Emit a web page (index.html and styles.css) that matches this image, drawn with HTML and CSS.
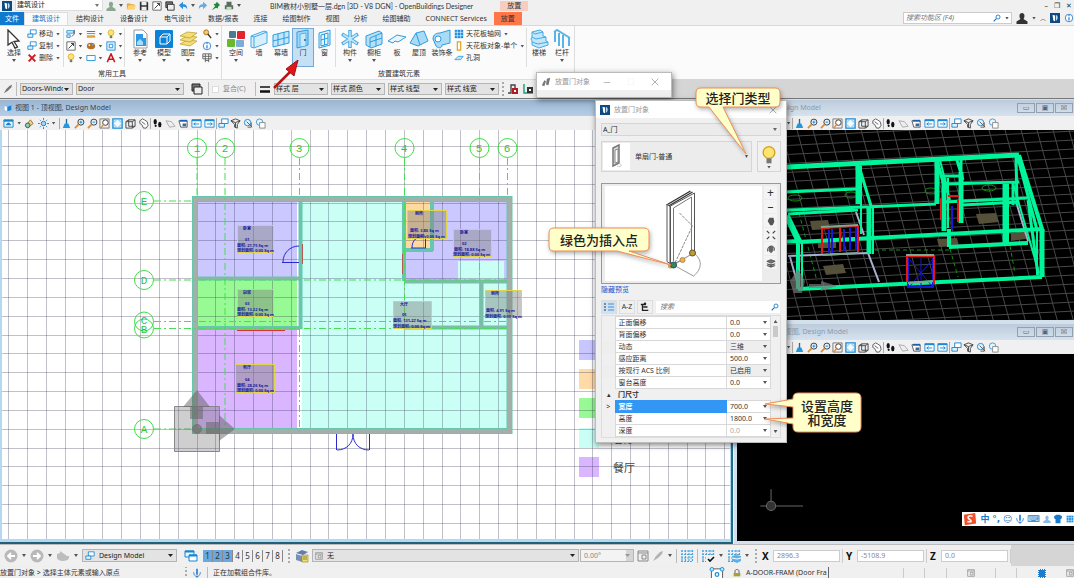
FILE: index.html
```
<!DOCTYPE html>
<html lang="zh-CN">
<head>
<meta charset="utf-8">
<title>OpenBuildings Designer</title>
<link rel="stylesheet" href="styles.css">
</head>
<body>
<svg class="defs" aria-hidden="true">
  <symbol id="brand" viewBox="0 0 12 12"><rect width="12" height="12" fill="#0b4a82"/><path d="M3 2l3 1v7L4 9z" fill="#fff"/><path d="M7 2.500c3 0 3 6 0 7z" fill="#b9dcf5"/></symbol>
  <symbol id="viewcube" viewBox="0 0 12 12"><path d="M1 3l4 1v7L1 9z" fill="#fff"/><path d="M5 4l6-2v7l-6 2z" fill="#1283d8"/><path d="M1 3l5-2 5 1-6 2z" fill="#7ec1f0"/></symbol>
  <symbol id="user" viewBox="0 0 12 12"><path d="M6 1c3 0 3 4 1.500 6l4 2.500V12H.5V9.500l4-2.500C3 5 3 1 6 1z" fill="currentColor"/></symbol>
  <symbol id="folder" viewBox="0 0 12 12"><path d="M1 3h4l1 1h4v6H1z" fill="#e0aa3c"/><path d="M3 5h9l-2 5H1z" fill="#ffd26b"/></symbol>
  <symbol id="save" viewBox="0 0 12 12"><path d="M1 1h9l1 1v9H1z" fill="#333"/><path d="M3 1h6v4H3zM3 7h6v4H3z" fill="#eee"/></symbol>
  <symbol id="undo" viewBox="0 0 12 12"><path d="M1 5l5-4v3c4 0 5 2 5 6-1-2-2-3-5-3v3z" fill="#2e8fdc"/></symbol>
  <symbol id="pin" viewBox="0 0 12 12"><path d="M7 1l4 4-2 1-1 3-2-1-5 3 4-5-2-2 3-1z" fill="#1d8a3a"/></symbol>
  <symbol id="print" viewBox="0 0 12 12"><path d="M3 1h6v4H3zM1 5h10v5H1z" fill="#5b6b60"/><path d="M3 7h6v4H3z" fill="#bfe3b2"/></symbol>
  <symbol id="arrow" viewBox="0 0 18 20"><path d="M3 1l11 11-5 .5 3.500 5.500-2.500 1.200-3-6L3 16z" fill="#fff" stroke="#333" stroke-width="1.300"/></symbol>
  <symbol id="copy" viewBox="0 0 12 12"><path d="M4 1h7v5H4z" fill="#fff" stroke="#1787d4"/><path d="M1 6h6v4H1z" fill="#e5f3fc" stroke="#1787d4"/></symbol>
  <symbol id="del" viewBox="0 0 12 12"><path d="M2 2l8 8M10 2l-8 8" stroke="#d3191f" stroke-width="2.400"/></symbol>
  <symbol id="cross" viewBox="0 0 12 12"><path d="M1 1l10 10M11 1L1 11" stroke="#888"/></symbol>
  <symbol id="panel" viewBox="0 0 12 12"><path d="M1 2h8v3H1zM1 7h4v3H1z" fill="#dff1fc" stroke="#1b8bd6"/><path d="M10 1v5L7 9" stroke="#444" fill="none"/></symbol>
  <symbol id="lines" viewBox="0 0 12 12"><path d="M1 3h10" stroke="#555"/><path d="M1 5.500h10" stroke="#1b8bd6"/><path d="M1 9h10" stroke="#e2a33c" stroke-width="3"/></symbol>
  <symbol id="bulb" viewBox="0 0 12 12"><circle cx="6" cy="4.500" r="3.500" fill="#ffe46e" stroke="#d0a024" stroke-width=".8"/><path d="M4.500 8h3v3h-3z" fill="#777"/></symbol>
  <symbol id="measure" viewBox="0 0 12 12"><path d="M1 1h10v10H1z" fill="#fff" stroke="#555"/><path d="M3 9l6-6M6 3h3v3" fill="none" stroke="#222"/></symbol>
  <symbol id="palette" viewBox="0 0 12 12"><ellipse cx="6" cy="6" rx="5" ry="4" fill="#b5712a"/><circle cx="4" cy="5" r="1" fill="#ffd"/><circle cx="8" cy="4.500" r="1" fill="#6bf"/></symbol>
  <symbol id="frame" viewBox="0 0 12 12"><path d="M1 1h10v10H1z" fill="#d9effc" stroke="#1b8bd6"/><path d="M4 4h4v4H4z" fill="#fff" stroke="#1b8bd6"/></symbol>
  <symbol id="rect" viewBox="0 0 12 12"><path d="M1 3h10v6H1z" fill="#fff" stroke="#1b8bd6"/></symbol>
  <symbol id="glyph-a" viewBox="0 0 12 12"><path d="M1.500 11L6 1l4.500 10M3.500 7.500h5" fill="none" stroke="#c8171e" stroke-width="1.800"/></symbol>
  <symbol id="ref" viewBox="0 0 20 20"><path d="M4 1h9l4 4v14H4z" fill="#fff" stroke="#999"/><path d="M6 5h7v4h3v8H6z" fill="#2b9ae6"/><path d="M7 13l3-3 3 3v3H7z" fill="#a8dbff"/></symbol>
  <symbol id="model" viewBox="0 0 20 20"><rect x="1" y="1" width="18" height="18" rx="1" fill="#0a82d8"/><path d="M6 8h7v7H6zM6 8l3-3h7l-3 3M16 5v7l-3 3" fill="none" stroke="#fff"/></symbol>
  <symbol id="layers" viewBox="0 0 20 20"><g fill="#f1dd79" stroke="#b99a24" stroke-width=".7"><path d="M2 15l7-4 10 1-7 5z"/><path d="M2 11l7-4 10 1-7 5z"/><path d="M2 7l7-4 10 1-7 5z"/></g></symbol>
  <symbol id="find" viewBox="0 0 12 12"><circle cx="5" cy="4" r="3" fill="#f3c76a" stroke="#a86c12"/><path d="M7 6l4 5" stroke="#333" stroke-width="1.600"/></symbol>
  <symbol id="info" viewBox="0 0 12 12"><circle cx="6" cy="6" r="4.500" fill="#fff" stroke="#2577d1"/><path d="M6 2.500v1.500M6 5v4" stroke="#2577d1" stroke-width="1.400"/></symbol>
  <symbol id="table" viewBox="0 0 12 12"><path d="M1 1h10v6H1zM1 4h10M4 1v10M8 1v10M4 9h4" fill="none" stroke="#555"/></symbol>
  <symbol id="space" viewBox="0 0 20 20"><rect x="3" y="2" width="7" height="7" rx="1" fill="#4a7c8f"/><rect x="11" y="2" width="8" height="8" rx="1" fill="#e0252c"/><rect x="1" y="10" width="8" height="8" rx="1" fill="#69b82f"/><rect x="10" y="11" width="8" height="7" rx="1" fill="#7aaed8"/></symbol>
  <symbol id="wall" viewBox="0 0 20 20"><path d="M2 7l13-5 3 1v11L5 19l-3-1z" fill="#d7eefb" stroke="#46a9e4"/><path d="M5 8v11M5 8l13-5M2 7l3 1" fill="none" stroke="#46a9e4"/></symbol>
  <symbol id="curtain" viewBox="0 0 20 20"><path d="M2 6l16-4v12L2 18z" fill="#c2e6fa" stroke="#2d9de0"/><path d="M7 5v12M13 3v12M2 12l16-4" stroke="#2d9de0"/></symbol>
  <symbol id="door" viewBox="0 0 20 20"><path d="M4 3l11-2v15L4 19z" fill="#9fd6f7" stroke="#2d9de0"/><path d="M7 5l6-1v13l-6 1z" fill="#c8e9fb" stroke="#58b4e8"/><circle cx="12" cy="11" r="1" fill="#17689e"/></symbol>
  <symbol id="window" viewBox="0 0 20 20"><path d="M4 4l11-3v15L4 19z" fill="#e4f4fd" stroke="#2d9de0"/><path d="M6 6l7-2v11l-7 2zM9.500 5v11M6 11l7-2" fill="none" stroke="#2d9de0"/></symbol>
  <symbol id="part" viewBox="0 0 20 20"><g fill="none" stroke="#46a9e4" stroke-width="3.500"><path d="M10 1v18M2 5l16 10M18 5L2 15"/></g><g fill="none" stroke="#c5e8fa" stroke-width="1.500"><path d="M10 2v16M3 5.500l14 9M17 5.500L3 14.500"/></g></symbol>
  <symbol id="cabinet" viewBox="0 0 20 20"><path d="M2 7l13-5 3 2v11L7 19l-5-3z" fill="#b7e0f7" stroke="#2d9de0"/><path d="M6 9v9M6 9l12-5M12 7v10M6 13l12-4" fill="none" stroke="#2d9de0"/></symbol>
  <symbol id="slab" viewBox="0 0 20 20"><path d="M1 12l9-6 9 2-8 5-3-1-2 2z" fill="#e8f6fe" stroke="#2d9de0"/></symbol>
  <symbol id="roof" viewBox="0 0 20 20"><path d="M1 14L7 4l8-2 4 10-10 5z" fill="#a9daf6" stroke="#2d9de0"/><path d="M7 4l4 12" stroke="#2d9de0"/></symbol>
  <symbol id="trim" viewBox="0 0 20 20"><path d="M1 10c0-5 4-6 7-6l10-3v13l-8 2c0 3-3 4-6 1z" fill="#a9daf6" stroke="#2d9de0"/><circle cx="6" cy="10" r="3" fill="#fff" stroke="#2d9de0"/></symbol>
  <symbol id="ceil" viewBox="0 0 12 12"><path d="M1 1h10v10H1z" fill="#198de0"/><path d="M1 4h10M1 8h10M4 1v10M8 1v10" stroke="#fff" stroke-width=".7"/></symbol>
  <symbol id="ceilone" viewBox="0 0 12 12"><path d="M4 1h4v10H4z" fill="#fff" stroke="#e0a518" stroke-width="1.400"/></symbol>
  <symbol id="hole" viewBox="0 0 12 12"><path d="M1 8l4-4h6L8 8z" fill="#bfe4fa" stroke="#2d9de0"/></symbol>
  <symbol id="stairs" viewBox="0 0 20 20"><path d="M3 3l8-2 3 2v4l3 1v4l2 1v3l-9 3-7-3v-4l-1-2 1-2z" fill="#c2e6fa" stroke="#46a9e4"/><path d="M3 3l3 2 8-2M3 8l4 2 10-2M3 13l6 2 10-2" fill="none" stroke="#46a9e4"/></symbol>
  <symbol id="rail" viewBox="0 0 20 20"><path d="M2 3l3-2 13 8M3 2v11M7 4v13M11 6v13M17 9v8" fill="none" stroke="#5bb4e8" stroke-width="2"/></symbol>
  <symbol id="lens" viewBox="0 0 12 12"><circle cx="7.500" cy="4.500" r="3" fill="none" stroke="#1677c9" stroke-width="1.300"/><path d="M5 7l-4 4" stroke="#1677c9" stroke-width="1.800"/></symbol>
  <symbol id="v-display" viewBox="0 0 12 12"><path d="M1 2h10v8H1z" fill="#e8f5fd" stroke="#1685cc"/><path d="M1 3h10" stroke="#1685cc" stroke-width="2"/><path d="M3 8c2-4 4-4 6 0z" fill="#1685cc"/></symbol>
  <symbol id="v-lamp" viewBox="0 0 12 12"><path d="M2 8l5-6 3 4-6 5z" fill="#f5cf6f" stroke="#8a7651"/><circle cx="4" cy="8" r="2.500" fill="#8fd0a4" stroke="#357"/></symbol>
  <symbol id="v-sun" viewBox="0 0 12 12"><circle cx="6" cy="6" r="2.500" fill="#9fd4f5" stroke="#1d7dc2"/><path d="M6 0v2M6 10v2M0 6h2M10 6h2M2 2l1 1M9 9l1 1M10 2L9 3M2 10l1-1" stroke="#1d7dc2"/></symbol>
  <symbol id="v-brush" viewBox="0 0 12 12"><path d="M6 1v6" stroke="#1b6ba8" stroke-width="1.500"/><path d="M4 6h4l2 5H2z" fill="#2497dd"/></symbol>
  <symbol id="v-zin" viewBox="0 0 12 12"><circle cx="7.500" cy="4.500" r="3.300" fill="#e4f4ff" stroke="#333"/><path d="M6 4.500h3M7.500 3v3" stroke="#1685cc"/><path d="M5 7l-4 4" stroke="#e88722" stroke-width="1.800"/></symbol>
  <symbol id="v-zout" viewBox="0 0 12 12"><circle cx="7.500" cy="4.500" r="3.300" fill="#e4f4ff" stroke="#333"/><path d="M6 4.500h3" stroke="#1685cc"/><path d="M5 7l-4 4" stroke="#e88722" stroke-width="1.800"/></symbol>
  <symbol id="v-zwin" viewBox="0 0 12 12"><path d="M1 1h10v10H1z" fill="none" stroke="#777"/><circle cx="7" cy="5" r="3" fill="#fff" stroke="#333"/><path d="M5 7l-3 4" stroke="#e88722" stroke-width="1.500"/></symbol>
  <symbol id="v-fit" viewBox="0 0 12 12"><path d="M1 1h10v10H1z" fill="#f3fbff" stroke="#1b8bd6" stroke-width="1.500"/><path d="M3 5V3h2M9 5V3H7M3 7v2h2M9 7v2H7" fill="none" stroke="#7fc2ec"/></symbol>
  <symbol id="v-cube" viewBox="0 0 12 12"><path d="M1 4l3-2h7v7l-3 2H1zM1 4h7v7M8 4l3-2M4 2v7h7" fill="none" stroke="#444"/></symbol>
  <symbol id="v-hand" viewBox="0 0 12 12"><path d="M2 3l3-2 2 1 3 2 1 4-2 3H6L4 7 2 6z" fill="#fff" stroke="#555"/><path d="M4 4l4 3" stroke="#555"/></symbol>
  <symbol id="v-walk" viewBox="0 0 12 12"><ellipse cx="3.500" cy="4" rx="1.800" ry="3" fill="#111"/><ellipse cx="8.500" cy="7" rx="1.800" ry="3" fill="#111"/><circle cx="4" cy="8.500" r="1.200" fill="#111"/></symbol>
  <symbol id="v-fly" viewBox="0 0 12 12"><path d="M1 3l6 1 4 5-6 1z" fill="#eee" stroke="#aaa"/></symbol>
  <symbol id="v-cam" viewBox="0 0 12 12"><path d="M1 3h9v7H3z" fill="#fff" stroke="#555"/><path d="M2 3h8" stroke="#1b62b6" stroke-width="2"/><path d="M5 6h4v3H5z" fill="#36699d"/></symbol>
  <symbol id="v-prev" viewBox="0 0 12 12"><path d="M1 2h10v8H1z" fill="#fff" stroke="#1b8bd6"/><path d="M1 2.500h10" stroke="#1b8bd6" stroke-width="2"/><path d="M3 6.500h6M5 5L3 6.500 5 8" fill="none" stroke="#1b8bd6"/></symbol>
  <symbol id="v-next" viewBox="0 0 12 12"><path d="M1 2h10v8H1z" fill="#fff" stroke="#1b8bd6"/><path d="M1 2.500h10" stroke="#1b8bd6" stroke-width="2"/><path d="M3 6.500h6M7 5l2 1.500L7 8" fill="none" stroke="#1b8bd6"/></symbol>
  <symbol id="v-clip" viewBox="0 0 12 12"><path d="M1 3l5-2 5 2-3 4v4l-3-1V7z" fill="#eee" stroke="#444"/><path d="M1 3l5 2 5-2M6 5v5" fill="none" stroke="#444"/></symbol>
  <symbol id="v-mask" viewBox="0 0 12 12"><circle cx="5" cy="5" r="3.500" fill="#dff2fd" stroke="#1b8bd6"/><path d="M4 4l6 6M9 5v5H5" fill="none" stroke="#555"/></symbol>
  <symbol id="v-over" viewBox="0 0 12 12"><circle cx="5" cy="4.500" r="3.500" fill="#e8f6fe" stroke="#3a9bd9"/><path d="M5 5h6v6H5z" fill="#fff" stroke="#888"/></symbol>
  <symbol id="pen" viewBox="0 0 12 12"><path d="M1 11l3-5 4-4 3-1-1 3-4 4z" fill="#777"/></symbol>
  <symbol id="stack" viewBox="0 0 12 12"><path d="M1 1h8v7H1z" fill="#777" stroke="#222"/><path d="M3 4h8v7H3z" fill="#eee" stroke="#222"/></symbol>
  <symbol id="weight" viewBox="0 0 12 12"><path d="M1 4h10" stroke="#111" stroke-width="1.500"/><path d="M1 8.500h10" stroke="#111" stroke-width="2.500"/></symbol>
  <symbol id="lockred" viewBox="0 0 12 12"><path d="M1 10h3V2h4v4" fill="none" stroke="#444" stroke-width="1.400"/><path d="M5 5h6v6H5z" fill="#b11b25"/><path d="M7 7h2v2H7z" fill="#fff"/></symbol>
  <symbol id="lockgreen" viewBox="0 0 12 12"><path d="M2 1v9h9" fill="none" stroke="#1b9a78" stroke-width="1.400"/><path d="M5 4h6v6H5z" fill="#333"/><path d="M7 6h2v2H7z" fill="#fff"/></symbol>
  <symbol id="clip" viewBox="0 0 12 12"><path d="M1 10l3-6 2 1-2 6zM6 9l1-7 4-1-2 9z" fill="#777"/></symbol>
  <symbol id="nav-back" viewBox="0 0 14 14"><circle cx="7" cy="7" r="6.500" fill="#b9b9b9"/><path d="M11 7H4M7 4L4 7l3 3" stroke="#fff" stroke-width="1.800" fill="none"/></symbol>
  <symbol id="nav-next" viewBox="0 0 14 14"><circle cx="7" cy="7" r="6.500" fill="#b9b9b9"/><path d="M3 7h7M7 4l3 3-3 3" stroke="#fff" stroke-width="1.800" fill="none"/></symbol>
  <symbol id="nav-disc" viewBox="0 0 14 14"><path d="M1 5l3-1V2l7 5h2v2c-1 4-11 4-12 0z" fill="#bdbdbd"/></symbol>
  <symbol id="views" viewBox="0 0 14 14"><path d="M1 2h9v6H1z" fill="#e8f5fd" stroke="#1787d4"/><path d="M1 2.500h9" stroke="#1787d4" stroke-width="2"/><path d="M5 6h8v6H5z" fill="#fff" stroke="#1787d4"/><path d="M5 6.500h8" stroke="#1787d4" stroke-width="2"/></symbol>
  <symbol id="dots" viewBox="0 0 14 14"><path d="M1 2h12M1 5.500h12M1 9h12M1 12.500h12M2 1v12M5.500 1v12M9 1v12M12.500 1v12" stroke="#4ba6df" stroke-width="1.200" stroke-dasharray="2 1" fill="none"/></symbol>
  <symbol id="dots-check" viewBox="0 0 14 14"><use href="#dots"/><path d="M5 6h9v8H5z" fill="#f0f0f0"/><path d="M7 10l2 2 4-4" fill="none" stroke="#111" stroke-width="1.600"/></symbol>
  <symbol id="dots-layer" viewBox="0 0 14 14"><use href="#dots"/><path d="M5 7l4-1 5 1v5l-4 2-5-2z" fill="#5fb0e4"/><path d="M5 9l5 1 4-1" stroke="#fff" fill="none"/></symbol>
  <symbol id="db" viewBox="0 0 14 14"><path d="M1 4l6-3 6 2-5 3z" fill="#5e7fb4"/><path d="M1 5v6l6 2V7z" fill="#7b8fb5"/><path d="M7 6h6v7H7z" fill="#f3df6c" stroke="#8e8130" stroke-width=".6"/><path d="M8 8h4M8 10h4" stroke="#8e8130"/></symbol>
  <symbol id="box" viewBox="0 0 12 12"><path d="M1 1h10v10H1zM1 3h10M5 5h4v4H5z" fill="none" stroke="currentColor"/></symbol>
  <symbol id="mic" viewBox="0 0 12 12"><path d="M5 1h2v7H5z" fill="#2577d1"/><path d="M2 5c0 7 8 7 8 0M6 9v3" stroke="#2577d1" fill="none"/></symbol>
  <symbol id="snap" viewBox="0 0 16 14"><path d="M2 2h12v12H2z" fill="#fff" stroke="#555"/><circle cx="2.500" cy="2.500" r="2" fill="#bde2fa" stroke="#168bd8"/><circle cx="13.500" cy="2.500" r="2" fill="#bde2fa" stroke="#168bd8"/><circle cx="8" cy="8" r="2" fill="#fff" stroke="#168bd8" stroke-width="1.300"/></symbol>
  <symbol id="lock" viewBox="0 0 12 12"><path d="M3 6V3c0-3 6-3 6 0v3" fill="none" stroke="#555" stroke-width="1.300"/><path d="M1 6h10v5H1z" fill="#a8a12a"/></symbol>
  <symbol id="list" viewBox="0 0 12 12"><path d="M1 3h2M1 6h2M1 9h2" stroke="#333"/><path d="M5 3h6M5 6h6M5 9h6" stroke="#4a8cc8"/></symbol>
  <symbol id="tree" viewBox="0 0 12 12"><path d="M1 3h6M3 3v7h7M4 6h5" stroke="#222" stroke-width="1.600" fill="none"/><circle cx="6" cy="2" r="1.500" fill="#222"/></symbol>
  <symbol id="p-hand" viewBox="0 0 12 12"><path d="M2 6l2-4h5l1 5-2 4H5z" fill="#555"/></symbol>
  <symbol id="p-fit" viewBox="0 0 12 12"><path d="M1 1l3 3M11 1L8 4M1 11l3-3M11 11L8 8" stroke="#444" stroke-width="1.500"/></symbol>
  <symbol id="p-rot" viewBox="0 0 12 12"><path d="M3 4l3-2 3 2v4l-3 3-3-3z" fill="#666"/><path d="M2 9C0 1 12 0 10 8" fill="none" stroke="#444"/></symbol>
  <symbol id="p-lay" viewBox="0 0 12 12"><path d="M1 4l5-2 5 2-5 2zM1 7l5 2 5-2M1 9l5 2 5-2" fill="#777" stroke="#444"/></symbol>
</svg>

<header class="titlebar">
  <svg class="i10"><use href="#brand"/></svg>
  <span class="combo title-combo"><select aria-label="工作流"><option>建筑设计</option></select></span>
  <div class="quick">
    <button aria-label="用户"><svg class="i10 sage"><use href="#user"/></svg></button><i class="caret"></i>
    <button aria-label="打开"><svg class="i10"><use href="#folder"/></svg></button>
    <button aria-label="保存"><svg class="i10"><use href="#save"/></svg></button>
    <button aria-label="保存设置"><svg class="i10"><use href="#measure"/></svg></button>
    <button aria-label="压缩"><svg class="i10"><use href="#stack"/></svg></button>
    <button aria-label="撤销"><svg class="i10"><use href="#undo"/></svg></button><i class="caret"></i>
    <button aria-label="重做"><svg class="i10 flip"><use href="#undo"/></svg></button>
    <button aria-label="固定"><svg class="i10"><use href="#pin"/></svg></button>
    <button aria-label="打印"><svg class="i10"><use href="#print"/></svg></button><i class="caret"></i>
  </div>
  <h1>BIM教材小别墅一层.dgn [3D - V8 DGN] - OpenBuildings Designer</h1>
  <span class="context">放置</span>
  <div class="winbtns"><button aria-label="最小化">–</button><button aria-label="还原">❐</button><button aria-label="关闭">✕</button></div>
</header>

<nav class="tabs">
  <button class="file">文件</button><button class="active">建筑设计</button><button>结构设计</button><button>设备设计</button><button>电气设计</button><button>数据/报表</button><button class="short">连接</button><button>绘图制作</button><button class="short">视图</button><button class="short">分析</button><button>绘图辅助</button><button class="short">CONNECT Services</button><button class="place">放置</button>
  <div class="tabs-right">
    <label class="search"><input type="text" placeholder="搜索功能区 (F4)" aria-label="搜索功能区"><svg class="i8"><use href="#lens"/></svg><i class="caret"></i></label>
    <svg class="i12"><use href="#user"/></svg><i class="caret"></i>
    <span class="chev">︿</span><svg class="i10"><use href="#brand"/></svg><svg class="i10"><use href="#info"/></svg>
  </div>
</nav>

<section class="ribbon">
  <div class="group g-common">
    <div class="tools">
      <button class="big w22"><svg><use href="#arrow"/></svg><span>选择</span><i class="caret"></i></button>
      <div class="stack edit">
        <button><svg class="i10"><use href="#copy"/></svg><span>移动</span><i class="caret"></i></button>
        <button><svg class="i10"><use href="#copy"/></svg><span>复制</span><i class="caret"></i></button>
        <button><svg class="i10"><use href="#del"/></svg><span>删除</span><i class="caret"></i></button>
      </div>
      <div class="nine">
        <button aria-label="属性"><svg class="i10"><use href="#panel"/></svg><i class="caret"></i></button>
        <button aria-label="线型"><svg class="i10"><use href="#lines"/></svg><i class="caret"></i></button>
        <button aria-label="照明"><svg class="i10"><use href="#bulb"/></svg><i class="caret"></i></button>
        <button aria-label="测量"><svg class="i10"><use href="#measure"/></svg><i class="caret"></i></button>
        <button aria-label="材质"><svg class="i10"><use href="#palette"/></svg><i class="caret"></i></button>
        <button aria-label="围栅"><svg class="i10"><use href="#frame"/></svg><i class="caret"></i></button>
        <button aria-label="显示"><svg class="i10"><use href="#bulb"/></svg><i class="caret"></i></button>
        <button aria-label="矩形"><svg class="i10"><use href="#rect"/></svg><i class="caret"></i></button>
        <button aria-label="文本"><svg class="i10"><use href="#glyph-a"/></svg><i class="caret"></i></button>
      </div>
      <button class="big w24"><svg><use href="#ref"/></svg><span>参考</span><i class="caret"></i></button>
      <button class="big w24"><svg><use href="#model"/></svg><span>模型</span><i class="caret"></i></button>
      <button class="big w24"><svg><use href="#layers"/></svg><span>图层</span><i class="caret"></i></button>
      <div class="stack">
        <button aria-label="查找"><svg class="i10"><use href="#find"/></svg><i class="caret"></i></button>
        <button aria-label="信息"><svg class="i10"><use href="#info"/></svg><i class="caret"></i></button>
        <button aria-label="表格"><svg class="i10"><use href="#table"/></svg><i class="caret"></i></button>
      </div>
    </div>
    <h2>常用工具</h2>
  </div>
  <div class="group g-place">
    <div class="tools">
      <button class="big w24"><svg><use href="#space"/></svg><span>空间</span><i class="caret"></i></button>
      <button class="big w22"><svg><use href="#wall"/></svg><span>墙</span></button>
      <button class="big w22"><svg><use href="#curtain"/></svg><span>幕墙</span></button>
      <button class="big w22 on"><svg><use href="#door"/></svg><span>门</span></button>
      <button class="big w22 ruled"><svg><use href="#window"/></svg><span>窗</span></button>
      <button class="big w24"><svg><use href="#part"/></svg><span>构件</span><i class="caret"></i></button>
      <button class="big w24"><svg><use href="#cabinet"/></svg><span>橱柜</span><i class="caret"></i></button>
      <button class="big w22"><svg><use href="#slab"/></svg><span>板</span></button>
      <button class="big w22"><svg><use href="#roof"/></svg><span>屋顶</span></button>
      <button class="big w24"><svg><use href="#trim"/></svg><span>装饰条</span></button>
      <div class="stack ceil">
        <button><svg class="i10"><use href="#ceil"/></svg><span>天花板轴网</span><i class="caret"></i></button>
        <button><svg class="i10"><use href="#ceilone"/></svg><span>天花板对象-单个</span><i class="caret"></i></button>
        <button><svg class="i10"><use href="#hole"/></svg><span>孔洞</span></button>
      </div>
      <button class="big w24"><svg><use href="#stairs"/></svg><span>楼梯</span></button>
      <button class="big w22"><svg><use href="#rail"/></svg><span>栏杆</span><i class="caret"></i></button>
    </div>
    <h2>放置建筑元素</h2>
  </div>
</section>

<section class="options">
  <div class="opt-left">
    <svg class="i10"><use href="#pen"/></svg><i class="rule"></i>
    <span class="combo c52"><select aria-label="系列"><option>Doors-Windows</option></select></span>
    <span class="combo c108"><select aria-label="部件"><option>Door</option></select></span>
    <svg class="i12 spaced"><use href="#stack"/></svg><i class="rule"></i>
    <label class="check"><input type="checkbox">复合(C)</label><i class="rule"></i>
    <svg class="i12"><use href="#weight"/></svg>
    <span class="combo c54"><select aria-label="层"><option>样式 层</option></select></span>
    <span class="combo c54"><select aria-label="颜色"><option>样式 颜色</option></select></span>
    <span class="combo c54"><select aria-label="线型"><option>样式 线型</option></select></span>
    <span class="combo c54"><select aria-label="线宽"><option>样式 线宽</option></select></span>
    <i class="grip"></i><svg class="i12"><use href="#lockred"/></svg><svg class="i12"><use href="#lockgreen"/></svg>
  </div>
</section>

<main class="workspace">
  <section class="view main-view">
    <div class="view-title"><svg class="i8"><use href="#viewcube"/></svg><span>视图 1 - 顶视图, Design Model</span></div>
    <div class="view-tools"></div>
    <svg class="canvas" viewBox="2 130 728 409" preserveAspectRatio="xMinYMin slice">
      <rect x="2" y="130" width="1200" height="900" fill="#fff"/>
      <g>
        <path fill="#c9fff5" d="M300 200h208v230H300z"/>
        <path fill="#cbc8ff" d="M197 201h100v77H197zM406 201h101v60h-49v20h-52zM504 260h3v20h-3z"/>
        <path fill="#98fa94" d="M197 280h100v47H197z"/>
        <path fill="#d9b6ff" d="M197 330h100v98H197z"/>
        <path fill="#ffd9a0" d="M406 201h25v48h-25z"/>
        <path fill="#fff" d="M297 201h2v227h-2zM297 330h5v98h-5z"/>
        <path fill="#c8c5ff" d="M579 340h20v20h-20z"/><path fill="#ffdba8" d="M579 369h20v20h-20z"/><path fill="#98fa94" d="M579 398h20v20h-20z"/><path fill="#c9fff5" d="M579 428h20v20h-20z"/><path fill="#d9b6ff" d="M579 457h20v20h-20z"/>
      </g>
      <path id="plan-grid" fill="none" stroke="#30304c" stroke-opacity=".3"/>
      <g fill="none">
        <g stroke="#66c7ae" stroke-width="6"><path d="M195 199h314.500v232H195z"/><path stroke-width="4" d="M197 278.500h103M197 328h103M300.500 200v129M404 200v81M432 200v51M404 250h29M404 281.500h104M481.500 282v46M405 327.500h102"/></g>
        <g stroke="#a5afaa" stroke-width="4"><path d="M195 199h314.500v232H195z"/><path stroke-width="2" stroke="#8db5a6" d="M197 278.500h103M197 328h103M404 281.500h104M481.500 282v46M405 327.500h102"/></g>
        <g stroke="#49dc55" stroke-dasharray="7 3 2 3"><path d="M197 158v40M225 158v270M299.500 158v40M299.500 330v104M404.500 158v170M479.500 158v122M507.500 158v40M154 201h40M154 280h353M154 321.500h353M154 328.500h353M154 429h40"/></g>
        <g stroke="#3ddf46"><circle cx="197" cy="148" r="9.500"/><circle cx="225" cy="148" r="9.500"/><circle cx="299.500" cy="148" r="9.500"/><circle cx="404.500" cy="148" r="9.500"/><circle cx="479.500" cy="148" r="9.500"/><circle cx="507.500" cy="148" r="9.500"/><circle cx="144" cy="201" r="9.500"/><circle cx="144" cy="280" r="9.500"/><circle cx="144" cy="321.500" r="9.500"/><circle cx="144" cy="328.500" r="9.500"/><circle cx="144" cy="429" r="9.500"/></g>
        <g stroke="#2a2ad0"><path d="M299 246c-9 0-16 7-16 16M282 262.500h17M336.500 434v16M369.500 434v16M337 450c9 0 16-6 16-16 0 10 7 16 16 16M412 248c0-8 5-12 13-12M425.500 236v12M411 248h15"/></g>
        <path stroke="#b55" d="M302.500 244v20M402.500 254v20"/><path stroke="#d33" d="M237 330.500h48"/>
      </g>
      <g class="axis"><text x="197" y="152">1</text><text x="225" y="152">2</text><text x="299" y="152">3</text><text x="404" y="152">4</text><text x="479" y="152">5</text><text x="507" y="152">6</text><text x="144" y="205">E</text><text x="144" y="284">D</text><text x="144" y="324">C</text><text x="144" y="333">B</text><text x="144" y="433">A</text></g>
      <g fill="#808080" fill-opacity=".45" stroke="#e2d44a"><path d="M237.500 225.500h36v27h-36zM237.500 289.500h36v27h-36zM235.500 364.500h39v28h-39zM407.500 210.500h39v28h-39zM453.500 229.500h38v27h-38zM393.500 301.500h38v27h-38zM485.500 290.500h36v27h-36z"/></g>
      <g class="room">
        <text x="243" y="230">卧室</text><text x="245" y="241">01</text><text x="237" y="247">面积: 21.75 Sq m</text><text x="237" y="252">规划面积: 0.00 Sq m</text>
        <text x="243" y="294">厨房</text><text x="245" y="305">03</text><text x="237" y="311">面积: 13.22 Sq m</text><text x="237" y="316">规划面积: 0.00 Sq m</text>
        <text x="243" y="369">餐厅</text><text x="245" y="381">04</text><text x="237" y="387">面积: 28.26 Sq m</text><text x="237" y="392">规划面积: 0.00 Sq m</text>
        <text x="415" y="215">厕所</text><text x="410" y="232">面积: 3.80 Sq m</text><text x="408" y="238">规划面积: 0.00 Sq m</text>
        <text x="460" y="234">卧室</text><text x="462" y="245">02</text><text x="454" y="251">面积: 18.88 Sq m</text><text x="453" y="256">规划面积: 0.00 Sq m</text>
        <text x="400" y="306">大厅</text><text x="402" y="316">05</text><text x="393" y="322">面积: 131.27 Sq m</text><text x="393" y="328">规划面积: 0.00 Sq m</text>
        <text x="491" y="295">厕所</text><text x="486" y="312">面积: 4.91 Sq m</text><text x="485" y="318">规划面积: 0.00 Sq m</text>
      </g>
      <g class="legend"><text x="613" y="443">客厅</text><text x="613" y="472">餐厅</text></g>
      <g fill="#606060" fill-opacity=".3"><path stroke="#888" d="M174.500 406.500h45v45h-45z"/><path fill-opacity=".5" d="M183 407l14-17 13 17h-7v12h-13v-12zM206 422h13v-7l16 14-16 12v-7h-13z"/><circle cx="197" cy="429" r="4.500" fill-opacity=".5" stroke="#777"/></g>
    </svg>
  </section>

  <div class="side">
    <section class="view">
      <div class="view-title dim"><svg class="i8"><use href="#viewcube"/></svg><span>视图 2, Design Model</span><div class="vbtns"><button aria-label="最小化">▭</button><button aria-label="最大化">▣</button><button aria-label="关闭">☒</button></div></div>
      <div class="view-tools"></div>
      <svg class="canvas" viewBox="736 130 338 190" preserveAspectRatio="xMinYMin slice">
        <rect x="736" y="130" width="900" height="900" fill="#000"/>
        <path id="iso-grid" fill="none" stroke="#484848"/>
        <g fill="#55503a"><path d="M809 221l18-1 2 9-18 1zM822 266l20-2 3 9-20 2zM975 214l20-1 3 9-20 2zM936 239l20-1 2 8-20 1zM1010 233l14-2 1 8-15 2zM817 241l18-1v8h-18z"/></g>
        <g fill="none" stroke="#12910f"><ellipse cx="794" cy="198" rx="7" ry="3"/><ellipse cx="850" cy="195" rx="6" ry="3"/><ellipse cx="930" cy="191" rx="6" ry="3"/><ellipse cx="988" cy="188" rx="7" ry="3"/><path stroke-dasharray="4 3" d="M798 213l18 68M874 250h75M949 249l8 28M1009 246l5 27"/></g>
        <g fill="none" stroke="#aab0d0" stroke-width="2"><path d="M787 256l80-3M867 253l11 29M789 257l7 25M855 212l8 23M1016 205l11 36"/></g>
        <g fill="none" stroke="#00f59b">
          <path stroke-width="5" d="M740 170l47-3 231-12M1041 229v48M857 164v40M868 206v48M936 160v44M943 178v53M960 172v51M1004 184v59"/>
          <path stroke-width="4" d="M1018 155l23 74-244 13-15-31M741 244l56-3M1041 277l-244 12M797 241v48M948 247l79-4M948 229v18"/>
          <path stroke-width="3" d="M740 194l115-5M740 212l195-8M787 214l70-4M939 176h20M944 184l74-2M943 202l83-4M962 205l56-3M858 166l12 40M936 160l9 33M955 157l7 23M1015 157l1 48M1017 158l19 72M1027 200l10 75M787 215l13 27M1012 183v22M960 158v15"/>
          <path stroke-width="2" d="M860 166v68M872 206v48M939 160l10 40M947 178v50M1007 184v60M1012 183l26 90M1036 231v44M801 241v46"/>
        </g>
        <g fill="none" stroke-width="2"><path stroke="#1717d5" d="M828 230v24M831 229v24M843 229v22M849 228v22M855 228v22M907 258v29h25v-29"/><path stroke="#1717d5" stroke-width="1" d="M909 260l22 26M931 260l-22 26M920 258v28"/><path stroke="#1717d5" d="M951 206v24"/><path stroke="#e51616" d="M821 254v-26l36-2v26M839 228v24M906 282v-26h27v28M947 196h11M957 200v22M940 198v22"/><path stroke="#7fa890" d="M907 283l25-2M820 227l37-2M905 255h28M822 255l35-2"/></g>
        <g fill="#777" fill-opacity=".7"><path d="M789 281l8-12 7 12-3 12h-8zM808 284h12v-3l16 5-16 5v-3h-12z"/></g>
      </svg>
    </section>
    <section class="view">
      <div class="view-title dim"><svg class="i8"><use href="#viewcube"/></svg><span>视图 4 - 前视图, Design Model</span><div class="vbtns"><button aria-label="最小化">▭</button><button aria-label="最大化">▣</button><button aria-label="关闭">☒</button></div></div>
      <div class="view-tools"></div>
      <svg class="canvas" viewBox="736 356 338 184" preserveAspectRatio="xMinYMax slice">
        <rect x="736" y="0" width="900" height="540" fill="#000"/>
        <g fill="none" stroke="#666"><path d="M769.500 489v17M759 505.500h42"/><circle cx="769.500" cy="505.500" r="4.500" fill="#333"/></g>
      </svg>
    </section>
  </div>
</main>

<footer class="bottombar">
  <button aria-label="后退"><svg class="i14"><use href="#nav-back"/></svg></button><i class="caret"></i>
  <button aria-label="前进"><svg class="i14"><use href="#nav-next"/></svg></button><i class="caret"></i>
  <button aria-label="模型"><svg class="i14"><use href="#nav-disc"/></svg></button><i class="caret"></i>
  <span class="combo c94 iconed"><svg class="i10"><use href="#copy"/></svg><select aria-label="模型"><option>Design Model</option></select></span>
  <svg class="i14 spaced"><use href="#views"/></svg>
  <div class="nums"><button class="on">1</button><button class="on">2</button><button class="on">3</button><button>4</button><button>5</button><button>6</button><button>7</button><button>8</button></div>
  <i class="grip"></i><svg class="i14"><use href="#db"/></svg>
  <span class="combo grow iconed"><svg class="i8 gray"><use href="#box"/></svg><select aria-label="ACS"><option>无</option></select></span>
  <span class="combo c54 angle"><input type="text" value="0.00°" aria-label="角度"></span>
  <svg class="i12 gray"><use href="#box"/></svg><svg class="i12 faint"><use href="#pen"/></svg><i class="caret"></i><i class="rule"></i>
  <svg class="i14"><use href="#dots"/></svg><i class="rule"></i><svg class="i14"><use href="#dots-check"/></svg><i class="caret"></i><svg class="i14"><use href="#dots-layer"/></svg><i class="caret"></i><i class="grip"></i>
  <label class="xyz"><b>X</b><input type="text" value="2896.3"></label>
  <label class="xyz"><b>Y</b><input type="text" value="-5108.9"></label>
  <label class="xyz"><b>Z</b><input type="text" value="0.0"></label>
  <div class="filler"></div>
</footer>
<footer class="status">
  <span class="prompt">放置门对象 &gt; 选择主体元素或输入原点</span>
  <span class="message"><i class="grip"></i><svg class="i10"><use href="#mic"/></svg><i class="rule"></i>正在加载组合件库。</span>
  <span class="level"><svg class="snap"><use href="#snap"/></svg><svg class="i8"><use href="#lock"/></svg><span>A-DOOR-FRAM (Door Fra</span></span>
  <span class="cells"><i></i><i></i><i></i><svg class="i8 gray"><use href="#box"/></svg><i></i><i></i><b class="bluebox"></b><svg class="i8 gray"><use href="#box"/></svg></span>
</footer>

<div class="float small-dialog">
  <div class="dlg-title"><svg class="i10"><use href="#clip"/></svg><span>放置门对象</span><button aria-label="最小化">—</button><button class="ghost" aria-label="最大化">□</button><button aria-label="关闭"><svg class="i8"><use href="#cross"/></svg></button></div>
</div>

<section class="float dialog">
  <div class="dlg-title"><svg class="i10"><use href="#brand"/></svg><span>放置门对象</span><button aria-label="关闭"><svg class="i8"><use href="#cross"/></svg></button></div>
  <div class="dlg-body">
    <span class="combo flat"><select aria-label="目录"><option>A_门</option></select></span>
    <div class="type-row">
      <button class="type"><svg viewBox="0 0 27 27"><rect width="27" height="27" fill="#fff"/><path d="M10 5l6-3v18l-6 3z" fill="#ddd" stroke="#777" stroke-width="1.500"/><path d="M12 7l3-1v13l-3 1z" fill="#fff" stroke="#888"/><path d="M17 21c3 1 0 4-3 2" fill="none" stroke="#ccc"/></svg><span>单扇门-普通</span><i class="caret"></i></button>
      <button class="lamp" aria-label="照明"><svg><use href="#bulb"/></svg><i class="caret"></i></button>
    </div>
    <div class="preview">
      <svg viewBox="605 186 156 95">
        <path d="M666 205l24-14M668 206l24-14" stroke="#333" stroke-width="1.400"/>
        <path d="M666.500 204.500l3 2v57l-3-2zM670 206l24-13v60l-24 13z" fill="#fff" stroke="#555"/><path d="M673 208l18-11v55M673 208v53" fill="none" stroke="#777"/>
        <path d="M679 213l13 13-18 38" fill="none" stroke="#888" stroke-dasharray="3 1"/>
        <path d="M673 265l20-12c9 6 9 16 0 23z" fill="#fff" stroke="#999"/>
        <circle cx="692" cy="253" r="3" fill="#c99a2b" stroke="#554"/><circle cx="682" cy="260" r="2.500" fill="#f0ae55" stroke="#b98743"/><circle cx="670" cy="266" r="2.500" fill="#e4a757"/><circle cx="673" cy="265" r="3" fill="#328c58" stroke="#256"/>
      </svg>
      <div class="ptools"><button>+</button><button>–</button><button aria-label="平移"><svg class="i10"><use href="#p-hand"/></svg></button><button aria-label="全景"><svg class="i10"><use href="#p-fit"/></svg></button><button aria-label="旋转"><svg class="i10"><use href="#p-rot"/></svg></button><button aria-label="图层"><svg class="i10"><use href="#p-lay"/></svg></button></div>
    </div>
    <a href="#preview">隐藏预览</a>
    <div class="prop-tools"><button class="on" aria-label="分类"><svg class="i12"><use href="#list"/></svg></button><button>A-Z</button><button aria-label="展开"><svg class="i10"><use href="#tree"/></svg></button><label><input type="text" placeholder="搜索" aria-label="搜索"><svg class="i8"><use href="#lens"/></svg></label></div>
    <div class="props">
      <table>
        <tr><td></td><th>正面偏移</th><td>0.0<i class="caret"></i></td></tr>
        <tr><td></td><th>背面偏移</th><td>0.0<i class="caret"></i></td></tr>
        <tr class="off"><td></td><th>动态</th><td>三维<i class="caret"></i></td></tr>
        <tr><td></td><th>感应距离</th><td>500.0<i class="caret"></i></td></tr>
        <tr class="off"><td></td><th>按现行 ACS 比例</th><td>已启用<i class="caret"></i></td></tr>
        <tr><td></td><th>窗台高度</th><td>0.0<i class="caret"></i></td></tr>
        <tr class="head"><td>▴</td><th colspan="2">门尺寸</th></tr>
        <tr class="sel"><td>&gt;</td><th>宽度</th><td>700.0<i class="caret"></i></td></tr>
        <tr><td></td><th>高度</th><td>1800.0<i class="caret"></i></td></tr>
        <tr class="mute"><td></td><th>深度</th><td>0.0<i class="caret"></i></td></tr>
      </table>
      <div class="scroll"><i class="caret up"></i><b></b><i class="caret"></i></div>
    </div>
  </div>
</section>

<div class="callout c1"><svg><path d="M5 1H79Q84 1 84 6V15Q84 20 79 20H27L50 67 13 20H5Q0 20 0 15V6Q0 1 5 1z"/></svg><span>选择门类型</span></div>
<div class="callout c2"><svg><path d="M5 1H95Q100 1 100 6V19Q100 24 95 24H80L122 38 68 24H5Q0 24 0 19V6Q0 1 5 1z"/></svg><span>绿色为插入点</span></div>
<div class="callout c3"><svg><path d="M5 1H63Q68 1 68 6V35Q68 40 63 40H5Q0 40 0 35V32L-28 27 0 26V15L-28 12 0 7V6Q0 1 5 1z"/></svg><span>设置高度<br>和宽度</span></div>
<svg class="pointer" viewBox="0 0 32 32"><path d="M2 28L19 11" stroke="#b41516" stroke-width="2.500"/><path d="M26 0L14 9l8 7z" fill="#e0161a" stroke="#9c1212"/></svg>

<div class="ime"><svg viewBox="0 0 16 16"><path d="M1 3l13-2 1 12-13 2z" fill="#f0512b"/><path d="M11 5C7 3 4 6 7 8s4 4-2 3" fill="none" stroke="#fff" stroke-width="1.800"/></svg><span>中</span><span>°,</span><span>☺</span><svg class="i10"><use href="#mic"/></svg><span>⌨</span><svg class="i8 faint"><use href="#user"/></svg><svg class="i10" viewBox="0 0 12 12"><path d="M1 3l3-2h4l3 2-1 3H9v5H3V6H2z" fill="#1a78c8"/></svg><svg class="i8"><use href="#ceil"/></svg></div>

<template id="view-tools">
  <div class="vg a"><svg><use href="#v-display"/></svg><i class="caret"></i><svg><use href="#v-lamp"/></svg><svg><use href="#v-sun"/></svg><i class="caret"></i></div>
  <div class="vg b"><svg><use href="#v-brush"/></svg><svg><use href="#v-zin"/></svg><svg><use href="#v-zout"/></svg><svg><use href="#v-zwin"/></svg><svg><use href="#v-fit"/></svg><svg><use href="#v-cube"/></svg><svg><use href="#v-hand"/></svg></div>
  <div class="vg c"><svg><use href="#v-walk"/></svg><svg><use href="#v-fly"/></svg><svg><use href="#v-cam"/></svg><svg><use href="#v-prev"/></svg><svg><use href="#v-next"/></svg></div>
  <div class="vg d"><svg><use href="#copy"/></svg><svg><use href="#v-clip"/></svg><svg><use href="#v-mask"/></svg><svg><use href="#v-over"/></svg></div>
</template>
<script src="app.js"></script>
</body>
</html>
```
FILE: styles.css
```
* { box-sizing: border-box; }
body { margin: 0; min-height: 100vh; display: flex; flex-direction: column; position: relative; overflow: hidden; background: #f0f0f0; color: #333; font: 7px/10px "Noto Sans", "Noto Sans CJK SC", sans-serif; }
button, input, select { font: inherit; color: inherit; margin: 0; padding: 0; border: 0; background: none; border-radius: 0; }
button { display: flex; align-items: center; justify-content: center; white-space: nowrap; }
svg { display: block; flex: none; }
h1, h2 { margin: 0; font: inherit; }
.defs { position: absolute; width: 0; height: 0; }
.i8 { width: 8px; height: 8px; }
.i10 { width: 10px; height: 10px; }
.i12 { width: 12px; height: 12px; }
.i14 { width: 14px; height: 14px; }
.spaced { margin: 0 2px 0 4px; }
.gray { color: #888; }
.faint { opacity: .5; }
.sage { color: #8aa890; }
.flip { transform: scaleX(-1); opacity: .7; }
.caret { flex: none; width: 4px; height: 3px; background: #555; clip-path: polygon(0 0, 100% 0, 50% 100%); }
.caret.up { clip-path: polygon(50% 0, 100% 100%, 0 100%); }
.rule { flex: none; width: 1px; height: 14px; background: #bbb; }
.grip { flex: none; width: 2px; height: 14px; border-left: 2px dotted #aaa; }

.combo { position: relative; display: flex; align-items: center; height: 12px; border: 1px solid #b5b5b5; background: #e3e3e3; color: #222; flex: none; }
.combo::after { content: ""; position: absolute; right: 3px; top: 4px; width: 5px; height: 3px; background: #222; clip-path: polygon(0 0, 100% 0, 50% 100%); }
.combo select { appearance: none; width: 100%; height: 10px; line-height: 10px; padding: 0 9px 0 1px; }
.c52 { width: 53px; } .c54 { width: 54px; } .c94 { width: 95px; } .c108 { width: 108px; }
.iconed { padding-left: 2px; gap: 3px; }

.titlebar { display: flex; align-items: center; height: 11px; padding-left: 2px; gap: 3px; }
.title-combo { width: 88px; height: 11px; background: #fff; border-color: #ddd; border-top: 0; }
.title-combo::after { width: 4px; background: #777; }
.quick { display: flex; align-items: center; gap: 3px; width: 134px; }
.titlebar h1 { margin-left: 27px; line-height: 10px; white-space: nowrap; font-family: Lato, "Noto Sans CJK SC", sans-serif; flex: 0 0 196px; }
.context { flex: none; width: 28px; margin-left: 24px; text-align: center; background: #f6cdbf; }
.winbtns { margin-left: auto; display: flex; gap: 6px; padding-right: 2px; }

.tabs { display: flex; align-items: stretch; height: 15px; border-bottom: 1px solid #d8d8d8; }
.tabs > button { padding: 0 8px; margin-top: 1px; }
.tabs > button.short { padding: 0 7px; }
.tabs > .file { background: #0f78cf; color: #fff; padding: 0 5px; }
.tabs > .active { background: #fbfbfb; color: #1673bd; border: 1px solid #ddd; border-bottom: 0; padding: 0 7px; }
.tabs > .place { background: #ff7648; padding: 0 7px; }
.tabs-right { margin-left: auto; display: flex; align-items: center; gap: 4px; }
.search { display: flex; align-items: center; gap: 4px; width: 109px; height: 12px; background: #fff; border: 1px solid #ccc; padding: 0 2px; }
.search input { flex: 1; min-width: 0; height: 10px; font-style: italic; }
.chev { font-size: 6px; }

.ribbon { display: flex; height: 53px; background: #fbfbfb; }
.group { display: flex; flex-direction: column; border-right: 1px solid #ddd; }
.group h2 { text-align: center; line-height: 10px; margin-top: 2px; }
.tools { display: flex; height: 41px; padding-top: 2px; }
.g-common { width: 222px; padding-left: 3px; }
.g-place { width: 353px; padding-left: 2px; }
.big { flex-direction: column; justify-content: flex-start; padding-top: 1px; height: 39px; }
.big svg { width: 20px; height: 20px; }
.big span { line-height: 8px; }
.big .caret { margin-top: 2px; }
.w22 { width: 22px; flex: none; } .w24 { width: 24px; flex: none; }
.on.big { background: #c5dff4; border: 1px solid #73a9d8; padding-top: 0; }
.ruled { margin-right: 2px; border-right: 1px solid #ddd; }
.stack { display: flex; flex-direction: column; }
.stack button { height: 12px; gap: 2px; justify-content: flex-start; padding-left: 2px; }
.stack .caret { margin-left: 1px; }
.edit { width: 39px; border-right: 1px solid #ddd; }
.nine { display: grid; grid-template-columns: repeat(3, 20px); grid-auto-rows: 12px; width: 61px; border-right: 1px solid #ddd; margin-right: 3px; }
.nine button { gap: 3px; }
.ceil { width: 73px; border-right: 1px solid #ddd; }
.ceil button { padding-left: 0; }

.options { height: 20px; background: #d5d5d5; border-bottom: 1px solid #777; }
.opt-left { display: flex; align-items: center; gap: 3px; width: 537px; height: 19px; background: #f0f0f0; border-top: 1px solid #ddd; padding-left: 3px; }
.check { display: flex; align-items: center; gap: 4px; width: 40px; color: #888; white-space: nowrap; }
.check input { appearance: none; width: 7px; height: 7px; background: #fff; border: 1px solid #ddd; }

.workspace { flex: 1; min-height: 0; display: grid; grid-template-columns: 733fr 341fr; background: #d4e1ed; padding-top: 1px; }
.view { display: flex; flex-direction: column; min-height: 0; min-width: 0; }
.main-view { background: #b3d8ef; border-right: 2px solid #1f6e87; border-bottom: 2px solid #22607a; padding: 0 1px 3px 2px; }
.view-title { display: flex; align-items: center; gap: 3px; height: 16px; flex: none; padding: 0 1px 0 4px; color: #344353; background: linear-gradient(#9bb5d1, #b6cfe9); }
.dim { color: #8b9aaa; background: linear-gradient(#bccbdb, #d6e2ef); }
.main-view .view-title { margin-left: -2px; }
.vbtns { margin-left: auto; display: flex; gap: 1px; }
.vbtns button { width: 18px; height: 10px; border: 1px solid #93a1af; color: #56616c; font: 7px/8px "DejaVu Sans", sans-serif; }
.view-tools { display: flex; align-items: center; height: 14px; flex: none; background: #f0f0f0; }
.main-view .view-tools { margin: 0 -1px 0 -2px; }
.vg { display: flex; align-items: center; justify-content: space-around; border-right: 1px solid #aaa; height: 11px; }
.vg svg { width: 11px; height: 11px; }
.vg.a { width: 60px; padding: 0 2px; } .vg.b { width: 91px; } .vg.c { width: 66px; } .vg.d { width: 50px; border: 0; }
.side .vg.a { width: 56px; padding: 0; }
.canvas { flex: 1; width: 100%; min-height: 0; height: 0; }
.side { display: grid; grid-template-rows: 220fr 217fr; gap: 4px; padding: 0 0 3px 3px; border-left: 1px solid #eef; min-height: 0; }
.axis text { fill: #2fc53a; font: 11px "Liberation Mono", monospace; text-anchor: middle; }
.room text { fill: #1a1a99; font: bold 4px "Noto Sans", "Noto Sans CJK SC", sans-serif; }
.legend text { fill: #444; font: 11px "Liberation Serif", "Noto Sans CJK SC", serif; }

.bottombar { display: flex; align-items: center; gap: 3px; height: 22px; padding-left: 4px; border-top: 1px solid #bbb; }
.bottombar .caret { margin: 0 1px; }
.bottombar .combo { height: 13px; }
.nums { display: flex; }
.nums button { width: 10px; height: 12px; border-right: 1px solid #888; font-size: 8px; }
.nums .on { background: #69a9df; }
.bottombar .grip { margin: 0 2px; }
.grow { flex: 1; min-width: 0; }
.angle { background: #d5d5d5; margin-left: -2px; }
.angle::after { background: #999; }
.angle input { width: 45px; height: 11px; background: #f3f3f3; color: #888; padding-left: 3px; }
.xyz { display: flex; align-items: center; gap: 4px; border-right: 1px solid #ccc; padding-right: 2px; }
.xyz b { font: bold 10px "Noto Sans", sans-serif; color: #111; width: 7px; }
.xyz input { width: 67px; height: 12px; background: #fff; border: 1px solid #ccc; color: #888; padding-left: 3px; }
.filler { align-self: stretch; width: 63px; background: #d5d5d5; margin-left: -3px; }
.status { display: flex; align-items: center; height: 13px; white-space: nowrap; overflow: hidden; border-top: 1px solid #eee; }
.prompt { width: 185px; }
.message { display: flex; align-items: center; gap: 5px; flex: 1; }
.level { display: flex; align-items: center; gap: 8px; width: 120px; border-right: 1px solid #666; }
.level span { margin-left: -3px; }
.snap { width: 16px; height: 13px; }
.cells { width: 245px; height: 13px; display: flex; align-items: center; justify-content: space-between; padding-left: 74px; }
.cells i { width: 1px; height: 11px; background: #ccc; }
.bluebox { width: 8px; height: 9px; background: #1c7bcb; border: 1px dotted #fff; }

.float { position: absolute; background: #f0f0f0; border: 1px solid #bbb; box-shadow: 1px 2px 6px rgba(0, 0, 0, .5); color: #333; }
.dlg-title { display: flex; align-items: center; gap: 4px; height: 17px; background: #fff; color: #999; padding: 0 9px 0 4px; white-space: nowrap; }
.dlg-title span { flex: 1; }
.small-dialog { left: 536px; top: 72px; width: 136px; height: 26px; }
.small-dialog .dlg-title { padding-right: 6px; }
.small-dialog button { width: 20px; }
.ghost { opacity: .25; }
.dialog { left: 595px; top: 100px; width: 192px; }
.dlg-body { display: flex; flex-direction: column; padding: 5px 5px 4px; }
.flat { height: 13px; background: #ebebeb; border-color: #d5d5d5; }
.flat::after { width: 4px; background: #666; }
.type-row { display: flex; gap: 5px; margin-top: 5px; }
.type { flex: 1; height: 31px; border: 1px solid #d5d5d5; background: #ececec; justify-content: flex-start; gap: 5px; padding: 0 3px 0 1px; }
.type svg { width: 27px; height: 27px; }
.type .caret { margin-left: auto; width: 3px; }
.lamp { width: 24px; height: 31px; border: 1px solid #d5d5d5; flex-direction: column; gap: 1px; }
.lamp svg { width: 20px; height: 20px; }
.preview { display: flex; justify-content: space-between; margin-top: 11px; height: 101px; border: 1px solid #999; padding: 2px 3px; background: #ececec; }
.preview > svg { width: 157px; height: 95px; background: #fff; }
.ptools { display: flex; flex-direction: column; gap: 1px; }
.ptools button { width: 13px; height: 13px; background: #f4f4f4; font-size: 12px; line-height: 12px; }
.dlg-body a { margin: 1px 0 5px; color: #1255cc; line-height: 10px; text-decoration: none; }
.prop-tools { display: flex; gap: 2px; height: 14px; margin-bottom: 1px; }
.prop-tools button { width: 16px; border: 1px solid #ddd; }
.prop-tools .on { background: #cfe2f3; }
.prop-tools label { flex: 1; display: flex; align-items: center; background: #fff; border: 1px solid #eee; padding: 0 1px 0 4px; }
.prop-tools input { flex: 1; min-width: 0; height: 10px; font-style: italic; }
.props { display: flex; border: 1px solid #ddd; }
.props table { flex: 1; border-collapse: collapse; table-layout: fixed; line-height: 10px; }
.props tr { height: 12px; }
.props td, .props th { padding: 0 3px; height: 12px; font-weight: normal; text-align: left; border: 1px solid #d8d8d8; background: #fff; }
.props td:first-child { width: 13px; background: #f0f0f0; border: 0; text-align: center; }
.props td:last-child { width: 44px; position: relative; }
.props td .caret { position: absolute; right: 3px; top: 4px; }
.props .off td { background: #eee; }
.props .head th { background: #f0f0f0; border: 0; font-weight: bold; }
.props .sel th { background: #3296f5; color: #fff; border-color: #3296f5; font-weight: bold; }
.props .mute td { color: #aaa; }
.scroll { width: 9px; display: flex; flex-direction: column; align-items: center; padding: 4px 0; }
.scroll b { width: 5px; height: 11px; background: #c9c9c9; margin: 3px 0 auto; }

.callout { position: absolute; display: flex; align-items: center; justify-content: center; text-align: center; color: #222; font: 500 13px/14px "Noto Sans CJK SC", sans-serif; white-space: nowrap; }
.callout svg { position: absolute; inset: 0; width: 100%; height: 100%; overflow: visible; filter: drop-shadow(1px 2px 2px rgba(0, 0, 0, .3)); }
.callout path { fill: #ffffc9; stroke: #ee8d58; stroke-width: 1px; }
.callout span { position: relative; }
.c1 { left: 696px; top: 87px; width: 84px; height: 21px; }
.c2 { left: 549px; top: 227px; width: 100px; height: 25px; }
.c3 { left: 793px; top: 392px; width: 68px; height: 41px; }
.pointer { position: absolute; left: 272px; top: 60px; width: 32px; height: 32px; }
.ime { position: absolute; right: 0; bottom: 53px; width: 112px; height: 14px; display: flex; align-items: center; justify-content: space-between; background: #fff; color: #1a78c8; font: bold 9px/12px "DejaVu Sans", "Noto Sans CJK SC", sans-serif; overflow: hidden; }
.ime > svg:first-child { width: 16px; height: 14px; }
```
FILE: app.js
```
const tools = document.getElementById('view-tools');
document.querySelectorAll('.view-tools').forEach(bar => bar.append(tools.content.cloneNode(true)));

// Plan grid, wide enough for a large window
let plan = '';
for (let i = 0; i < 64; i++) {
  const x = Math.round(8 + i * 18.85) + 0.5;
  const y = Math.round(146 + i * 18.85) + 0.5;
  plan += `M${x} 130V1000M2 ${y}H1200`;
}
document.getElementById('plan-grid').setAttribute('d', plan);

// Isometric grid
let iso = '';
for (let i = -12; i < 34; i++) {
  iso += `M${700 + i * 16} 130l55 200M736 ${130 + i * 9}l338 -17`;
}
document.getElementById('iso-grid').setAttribute('d', iso);
```
